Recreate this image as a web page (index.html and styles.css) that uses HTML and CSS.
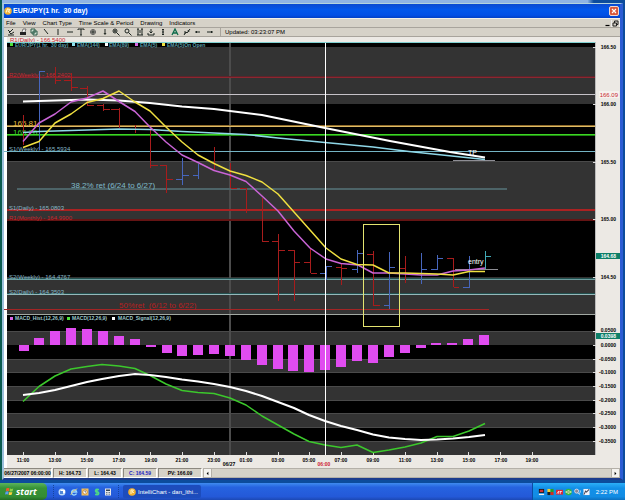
FILE: index.html
```html
<!DOCTYPE html>
<html lang="en">
<head>
<meta charset="utf-8">
<title>IntelliChart</title>
<link rel="stylesheet" href="styles.css">
</head>
<body>
<main class="desktop">
  <section class="window">
    <header class="titlebar">
      <svg class="app-icon" viewBox="0 0 8 8"><circle cx="4" cy="4" r="3.8" fill="#f3b12e"/><path d="M2 5.5 3.5 2 5.8 2.6 4.4 4.5 6 5.6" fill="none" stroke="#fff3c4" stroke-width="1.2"/></svg>
      <h1>EUR/JPY(1 hr.&nbsp; 30 day)</h1>
      <button class="close" aria-label="Close"><svg viewBox="0 0 10 10"><path d="M2.5 2.5l5 5M7.5 2.5l-5 5" stroke="#fff" stroke-width="1.4"/></svg></button>
    </header>
    <nav class="menubar">
      <button>File</button><button>View</button><button>Chart Type</button><button>Time Scale &amp; Period</button><button>Drawing</button><button>Indicators</button>
      <span class="mdi">
        <button aria-label="Minimize"><svg viewBox="0 0 7 7"><path d="M1.5 5.5h4" stroke="#000" stroke-width="1.2"/></svg></button>
        <button aria-label="Restore"><svg viewBox="0 0 7 7"><path d="M1 6V3h3.5v3zM2.5 3V1h3.5v3.5h-1.500" fill="none" stroke="#222"/></svg></button>
      </span>
    </nav>
    <div class="toolbar">
      <div class="tools">
        <button aria-label="Chart"><svg viewBox="0 0 8 8"><path d="M1 2l2 2 3-3M2 4l2 2 3-2M1 7h6" class="ic"/></svg></button>
        <button aria-label="Print"><svg viewBox="0 0 8 8"><path d="M1 4h6v3H1z" fill="#222"/><path d="M3 4l1-3h3l-1 3" fill="#eee" stroke="#333" stroke-width=".6"/></svg></button>
        <button aria-label="Copy"><svg viewBox="0 0 8 8"><path d="M1 1h4v4H1zM3 3h4v4H3z" fill="#cfe0d4" stroke="#174d38" stroke-width=".9"/></svg></button>
        <button aria-label="Trend line"><svg viewBox="0 0 8 8"><path d="M2 1l4 5" class="ic"/></svg></button>
        <button aria-label="Vertical line"><svg viewBox="0 0 8 8"><path d="M4 1v6" class="ic"/></svg></button>
        <button aria-label="Horizontal line"><svg viewBox="0 0 8 8"><path d="M1 4h6" class="ic"/></svg></button>
        <button aria-label="Text"><svg viewBox="0 0 8 8"><path d="M1 2V1h6v1M4 1v6M3 7h2" class="ic"/></svg></button>
        <button aria-label="Crosshair"><svg viewBox="0 0 8 8"><circle cx="4" cy="4" r="2.500" fill="none" stroke="#555"/><path d="M4 2v4M2 4h4" class="ic"/></svg></button>
        <button aria-label="Arrow down"><svg viewBox="0 0 8 8"><path d="M4 1v5M3 5l1 1.500 1-1.500" class="ic"/></svg></button>
        <button aria-label="Zoom in"><svg viewBox="0 0 8 8"><circle cx="3" cy="3" r="2" class="ic"/><path d="M2 3h2M3 2v2M4.500 4.500l3 3" class="ic"/></svg></button>
        <button aria-label="Zoom out"><svg viewBox="0 0 8 8"><circle cx="3" cy="3" r="2" class="ic"/><path d="M4.500 4.500l3 3" class="ic"/></svg></button>
        <button aria-label="Range"><svg viewBox="0 0 8 8"><path d="M1 1h2M2 1v6M1 7h6M5 1h2M6 1v6M4 2v3" class="ic"/></svg></button>
        <button aria-label="Import"><svg viewBox="0 0 8 8"><path d="M4 1v4M2.500 3.500 4 5l1.500-1.500M1 5v2h6V5" class="ic"/></svg></button>
        <button aria-label="Height"><svg viewBox="0 0 8 8"><path d="M3 1.500h2M4 1.500v5M3 6.500h2M3 4h2" class="ic"/></svg></button>
        <button aria-label="Font"><svg viewBox="0 0 8 8"><path d="M1 7l3-6 3 6M2.500 5h3" fill="none" stroke="#0b6b4a" stroke-width="1.300"/></svg></button>
        <button aria-label="Edit"><svg viewBox="0 0 8 8"><path d="M1 7l2-3 1 1 3-4M2 3v3M5 2l1 2" class="ic"/></svg></button>
        <button aria-label="Back"><svg viewBox="0 0 8 8"><path d="M1 4h5M2.500 3v2" class="ic"/></svg></button>
        <button aria-label="Forward"><svg viewBox="0 0 8 8"><path d="M1 4h6M5.500 3v2" class="ic"/></svg></button>
      </div>
      <span class="updated">Updated: 03:23:07 PM</span>
    </div>

    <svg class="chart" viewBox="4 37 616 431" role="img" aria-label="EUR/JPY hourly chart with MACD">
      <rect x="4" y="37" width="616" height="431" fill="#ece9e4"/>
      <rect x="4" y="37" width="3" height="431" fill="#fff"/>
      <text x="10" y="42" class="lab red">R1(Daily) - 166.5400</text>
      <g shape-rendering="crispEdges">
        <rect x="7" y="42" width="589" height="413"/>
        <rect x="7" y="42" width="589" height="1" fill="#7fd0d0"/>
        <g fill="#333">
          <rect x="7" y="47" width="588" height="57"/><rect x="7" y="162" width="588" height="58"/>
          <rect x="7" y="277" width="588" height="38"/><rect x="7" y="332" width="588" height="13"/>
          <rect x="7" y="359" width="588" height="13"/><rect x="7" y="387" width="588" height="13"/>
          <rect x="7" y="414" width="588" height="13"/><rect x="7" y="441" width="588" height="14"/>
        </g>
        <rect x="595" y="42" width="1" height="413" fill="#bbb"/>
        <g fill="#4a4a4a">
          <rect x="7" y="161" width="588" height="1"/><rect x="7" y="331" width="588" height="1"/><rect x="7" y="359" width="588" height="1"/>
          <rect x="7" y="372" width="588" height="1"/><rect x="7" y="386" width="588" height="1"/><rect x="7" y="400" width="588" height="1"/>
          <rect x="7" y="413" width="588" height="1"/><rect x="7" y="427" width="588" height="1"/><rect x="7" y="441" width="588" height="1"/>
        </g>
        <rect x="229" y="43" width="2" height="412" fill="#4c4c4c"/>
        <rect x="7" y="76" width="588" height="1" fill="#5c242a"/><rect x="7" y="77" width="588" height="1" fill="#8d2630"/>
        <rect x="7" y="94" width="588" height="1" fill="#c6c2c8"/>
        <rect x="7" y="125" width="588" height="1" fill="#8f6c2c"/><rect x="7" y="126" width="588" height="1" fill="#e0bc66"/>
        <rect x="7" y="134" width="588" height="1" fill="#3fd524"/><rect x="7" y="135" width="588" height="1" fill="#1c8a10"/>
        <rect x="4" y="151" width="591" height="1" fill="#74b4c4"/>
        <rect x="17" y="188" width="490" height="2" fill="#4d6468"/>
        <rect x="7" y="209" width="588" height="2" fill="#ab2222"/>
        <rect x="7" y="219" width="588" height="2" fill="#641414"/>
        <rect x="7" y="278" width="588" height="1" fill="#23504f"/><rect x="7" y="279" width="588" height="1" fill="#6b9c9e"/>
        <rect x="7" y="293" width="588" height="1" fill="#23504f"/><rect x="7" y="294" width="588" height="1" fill="#94b8ba"/>
        <rect x="4" y="309" width="485" height="1" fill="#a32525"/>
        <rect x="7" y="314" width="588" height="1" fill="#a2a8a2"/>
      </g>

      <!-- bottom and right axis ticks -->
      <path d="M23.500 452v3M55.500 452v3M87.500 452v3M119.500 452v3M150.500 452v3M182.500 452v3M214.500 452v3M246.500 452v3M278.500 452v3M309.500 452v3M341.500 452v3M373.500 452v3M405.500 452v3M437.500 452v3M468.500 452v3M500.500 452v3M532.500 452v3M593 47.500h3M593 104.500h3M593 162.500h3M593 219.500h3M593 277.500h3M593 331.500h3M593 345.500h3M593 359.500h3M593 372.500h3M593 386.500h3M593 400.500h3M593 413.500h3M593 427.500h3M593 441.500h3" stroke="#ddd"/>

      <g class="lab red">
        <text x="9" y="77">R2(Weekly) - 166.2402</text>
        <text x="9" y="220">R1(Monthly) - 164.9900</text>
      </g>
      <g class="lab cyan">
        <text x="9" y="151">S1(Weekly) - 165.5934</text>
        <text x="9" y="210">S1(Daily) - 165.0803</text>
        <text x="9" y="279">S2(Weekly) - 164.4767</text>
        <text x="9" y="294">S2(Daily) - 164.3503</text>
      </g>
      <g class="note">
        <text x="13" y="126" fill="#e6b93c">165.81</text>
        <text x="13" y="135" fill="#3ed52a">165.76</text>
        <text x="71" y="188" fill="#7fbccb">38.2% ret (6/24 to 6/27)</text>
        <text x="119" y="308" fill="#b62121">50%ret&#160; (6/12 to 6/22)</text>
      </g>

      <g fill="none" shape-rendering="crispEdges">
        <path stroke="#a81c1c" d="M23.500 115v30M55.500 67v17M55 80.500h6M71.500 73v18M64 80.500h7M72 87.500h6M87.500 86v20M80 88.500h7M88 105.500h6M103.500 104v7M97 105.500h6M104 109.500h6M119.500 108v20M111 109.500h8M135.500 125v8M150.500 128v40M151 165.500h7M166.500 165v28M160 165.500h6M167 179.500h6M214.500 147v23M230.500 163v25M231 188.500h6M246.500 188v25M240 188.500h6M262.500 198v44M263 241.500h6M278.500 234v67M272 241.500h6M279 250.500h6M294.500 250v51M288 250.500h6M295 262.500h5M310.500 249v24M304 262.500h6M311 273.500h6M341.500 263v22M336 267.500h5M342 268.500h5M373.500 251v55M367 254.500h6M374 305.500h6M405.500 256v27M400 268.500h5M406 273.500h5M453.500 258v29M447 258.500h6M454 287.500h5"/>
        <path stroke="#4766bd" d="M39.500 71v79M40 71.500h5M182.500 158v27M176 179.500h6M183 175.500h6M198.500 164v15M193 175.500h5M326.500 266v14M320 273.500h6M327 266.500h5M357.500 250v23M352 269.500h5M358 253.500h5M389.500 252v57M384 305.500h5M390 267.500h5M421.500 253v31M422 269.500h5M437.500 255v15M431 269.500h6M438 258.500h5M469.500 256v32M463 287.500h6M470 269.500h5"/>
        <path stroke="#3fa9b5" d="M485.500 251v18M486 256.500h5"/>
        <path stroke="#8d8d94" d="M453 160.500h42M455 269.500h43"/>
      </g>

      <g class="curve">
        <polyline stroke="#8fd8e8" points="23,132.500 39,131.500 71,130.500 119,129 150,129.500 182,131.500 214,133 246,134.500 278,138 325,142.500 373,147 409,151.500 485,159.500"/>
        <polyline class="thick" stroke="#fff" points="23,101.500 55,100.500 87,99.500 119,100.500 150,103 182,106.500 214,109 230,111 262,115 325,128 390,141 450,152 485,157.500"/>
        <polyline stroke="#c964d6" points="23,141.500 39,123 55,114 71,102 87,98 103,91 119,101.500 135,111.500 150,127 166,142 182,155 198,162.500 214,170.500 230,175 246,181.500 262,196 278,211 294,231 310,248 326,259 341,263.500 358,265 373,273 389,273 405,274 421,275 437,275 453,271 469,270 485,268"/>
        <polyline stroke="#f0e040" points="23,147.500 39,141.500 55,123 71,114 87,102.500 103,98.500 119,91 135,102 150,111 166,127 182,142 198,155 214,163.500 230,171 246,175.500 262,182 278,194 294,212 310,230 326,248 341,259 357,264.500 373,265 389,273 405,273 437,274 453,275 469,271.500 485,271.500"/>
      </g>
      <rect x="363.500" y="224.500" width="36" height="102" fill="none" stroke="#e4e470"/>
      <g class="mark"><text x="468" y="155">TP</text><text x="468" y="264">entry</text></g>

      <g fill="#e04cf0" shape-rendering="crispEdges">
        <rect x="19" y="345" width="10" height="6"/><rect x="34" y="338" width="10" height="7"/><rect x="50" y="331" width="10" height="14"/><rect x="66" y="328" width="10" height="17"/><rect x="82" y="329" width="10" height="16"/><rect x="98" y="331" width="10" height="14"/><rect x="114" y="336" width="10" height="9"/><rect x="130" y="339" width="10" height="6"/><rect x="146" y="345" width="10" height="2"/><rect x="162" y="345" width="10" height="8"/><rect x="177" y="345" width="10" height="11"/><rect x="193" y="345" width="10" height="10"/><rect x="209" y="345" width="10" height="9"/><rect x="225" y="345" width="10" height="11"/><rect x="241" y="345" width="10" height="15"/><rect x="257" y="345" width="10" height="20"/><rect x="273" y="345" width="10" height="24"/><rect x="288" y="345" width="10" height="26"/><rect x="304" y="345" width="10" height="27"/><rect x="320" y="345" width="10" height="25"/><rect x="336" y="345" width="10" height="22"/><rect x="352" y="345" width="10" height="16"/><rect x="368" y="345" width="10" height="18"/><rect x="384" y="345" width="10" height="12"/><rect x="400" y="345" width="10" height="8"/><rect x="416" y="345" width="10" height="3"/><rect x="431" y="343" width="10" height="2"/><rect x="447" y="343" width="10" height="2"/><rect x="463" y="339" width="10" height="6"/><rect x="479" y="335" width="10" height="10"/>
      </g>
      <g class="curve">
        <polyline stroke="#3cc82c" points="23,401.500 39,386.500 55,376 71,369 87,366.500 102,364.500 119,366 135,368.500 151,376 166,384 182,390.500 198,392.500 214,393.500 230,398 246,405 262,416 278,425 294,434 309,441.500 325,445 341,447.500 357,445 373,452.500 389,450 405,447 421,443 437,436.500 453,436.500 469,431 485,423.500"/>
        <polyline class="thick" stroke="#fff" points="23,395 39,393 55,390 71,386 87,382 102,379 119,376 135,374 150,375 166,377 182,379.500 198,381.500 214,384 230,387 246,391 262,396 278,402 294,408 309,415 325,421 341,426 357,430 373,434.500 389,437.500 405,439 421,440 437,439.500 453,438.500 469,437 485,435"/>
      </g>
      <rect x="325" y="43" width="1" height="412" fill="#fff"/>

      <rect x="10" y="43" width="3" height="3" fill="#4fe03a"/><rect x="72" y="43" width="3" height="3" fill="#8fe0ee"/><rect x="105" y="43" width="3" height="3" fill="#fff"/><rect x="135" y="43" width="3" height="3" fill="#d766e4"/><rect x="162" y="43" width="3" height="3" fill="#f0e040"/>
      <g class="legend" fill="#5f9da6">
        <text x="15" y="47">EUR/JPY(1 hr.&#160; 30 day)</text><text x="77" y="47">EMA(144)</text><text x="109" y="47">EMA(89)</text><text x="140" y="47">EMA(5)</text><text x="167" y="47">EMA(5)On Open</text>
      </g>
      <rect x="10" y="317" width="3" height="3" fill="#d766e4"/><rect x="67" y="317" width="3" height="3" fill="#4fe03a"/><rect x="112" y="317" width="3" height="3" fill="#fff"/>
      <g class="legend" fill="#9fc8cc">
        <text x="15" y="320">MACD_Hist.(12,26,9)</text><text x="72" y="320">MACD(12,26,9)</text><text x="118" y="320">MACD_Signal(12,26,9)</text>
      </g>

      <rect x="596" y="253" width="24" height="6" fill="#0d7f68"/>
      <rect x="596" y="333" width="24" height="6" fill="#0d7f68"/>
      <g class="axis">
        <g class="end">
          <text x="616" y="49">166.50</text><text x="616" y="106">166.00</text><text x="616" y="164">165.50</text><text x="616" y="221">165.00</text><text x="616" y="279">164.50</text>
          <text x="616" y="332">0.0500</text><text x="616" y="347">0.0000</text><text x="616" y="361">-0.0500</text><text x="616" y="374">-0.1000</text><text x="616" y="388">-0.1500</text><text x="616" y="402">-0.2000</text><text x="616" y="415">-0.2500</text><text x="616" y="429">-0.3000</text><text x="616" y="443">-0.3500</text>
          <text x="616" y="258" fill="#fff">164.68</text>
          <text x="616" y="338" fill="#fff">0.0398</text>
        </g>
        <g class="mid">
          <text x="23" y="462">11:00</text><text x="55" y="462">13:00</text><text x="87" y="462">15:00</text><text x="119" y="462">17:00</text><text x="151" y="462">19:00</text><text x="182" y="462">21:00</text><text x="214" y="462">23:00</text><text x="246" y="462">01:00</text><text x="278" y="462">03:00</text><text x="309" y="462">05:00</text><text x="341" y="462">07:00</text><text x="373" y="462">09:00</text><text x="405" y="462">11:00</text><text x="437" y="462">13:00</text><text x="469" y="462">15:00</text><text x="501" y="462">17:00</text><text x="532" y="462">19:00</text>
          <text x="229" y="466">06/27</text><text x="324" y="466" fill="#cc2030">06:00</text>
        </g>
      </g>
      <rect x="599" y="91" width="20" height="7" fill="#f6f2ee"/>
      <text x="618" y="97" class="lab red end">166.09</text>
    </svg>

    <footer class="status">
      <span class="cell date">06/27/2007 06:00:00</span>
      <span class="cell">H: 164.73</span>
      <span class="cell">L: 164.43</span>
      <span class="cell closing">C: 164.59</span>
      <span class="cell pv">PV: 166.09</span>
      <div class="scroll">
        <button aria-label="Scroll left"><svg viewBox="0 0 8 8"><path d="M5 2v4L3 4z"/></svg></button>
        <div class="track"></div>
        <button aria-label="Scroll right"><svg viewBox="0 0 8 8"><path d="M3 2v4l2-2z"/></svg></button>
      </div>
    </footer>
  </section>

  <nav class="taskbar">
    <button class="start"><svg viewBox="0 0 10 10"><path d="M1.500 1.500q2-1 3.500 0L4.300 4.600q-1.700-1-3.400 0z" fill="#f05a28"/><path d="M5.600 1.700q2 .8 3.600 0l-.8 3q-1.800.8-3.500 0z" fill="#8cd048"/><path d="M.7 5.300q1.800-.9 3.400 0L3.400 8.400q-1.700-.9-3.400 0z" fill="#5a9cf0"/><path d="M4.700 5.500q1.800.8 3.500 0l-.8 3q-1.800.9-3.400 0z" fill="#fad23c"/></svg>start</button>
    <div class="quick">
      <button aria-label="Messenger"><svg viewBox="0 0 8 8"><circle cx="4" cy="4" r="3.500" fill="#bcd8f6"/><path d="M3 2h4v3H3z" fill="#fff"/><path d="M2 3h3v3H2z" fill="#4f86d8"/></svg></button>
      <button aria-label="Internet Explorer"><svg viewBox="0 0 8 8"><path d="M6.500 5.500A2.600 2.600 0 1 1 6.700 4H2" fill="none" stroke="#9ad8ff" stroke-width="1.300"/><path d="M.7 7Q1 3 7.300.8" fill="none" stroke="#e8d070" stroke-width=".8"/></svg></button>
      <button aria-label="Outlook"><svg viewBox="0 0 8 8"><path d="M.5.5h7v7h-7z" fill="#f0c060"/><circle cx="4" cy="4" r="2.200" fill="#fff" stroke="#c07a20" stroke-width=".8"/><path d="M4 2.500V4h1" stroke="#444" fill="none" stroke-width=".7"/></svg></button>
      <button aria-label="Finance"><svg viewBox="0 0 8 8"><path d="M6 1.500H3Q1.800 3 3 4h2q1.500 1 .2 2.500H2M4 .5v7" fill="none" stroke="#4fd884" stroke-width="1.400"/></svg></button>
      <button aria-label="Calculator"><svg viewBox="0 0 8 8"><path d="M1 .5h6v7H1z" fill="#e6e6ea"/><path d="M2 1.500h4v1.500H2z" fill="#345"/><path d="M2 4.500h4M2 6.200h4" stroke="#678" stroke-dasharray="1 .5"/></svg></button>
    </div>
    <button class="task"><svg viewBox="0 0 8 8"><circle cx="4" cy="4" r="3.800" fill="#f3b12e"/><path d="M3 6V2h2.500L4 4l2 .5" fill="none" stroke="#fff3c4"/></svg>IntelliChart - dan_lthi...</button>
    <div class="tray">
      <svg viewBox="0 0 8 8"><path d="M1 .5h6v4.500H1z" fill="#181820"/><path d="M2 1.500h4v2.500H2z" fill="#d03030"/><path d="M1 6h6v1.500H1z" fill="#eee"/></svg>
      <svg viewBox="0 0 8 8"><path d="M.5.5H4V4H.5z" fill="#f0d030"/><path d="M4 .5h3.500V4H4z" fill="#28a028"/><path d="M.5 4H4v3.500H.5z" fill="#202020"/><path d="M4 4h3.500v3.500H4z" fill="#d03020"/></svg>
      <svg viewBox="0 0 8 8"><path d="M0 1.500h8v5.500H0z" fill="#d82838"/><path d="M1 6l2-3v3M5 3v3M4 3.500h3" stroke="#fff" stroke-width=".8" fill="none"/></svg>
      <svg viewBox="0 0 8 8"><circle cx="4" cy="4" r="3.700" fill="#30b840"/><path d="M0 4l4-2 4 2-4 2z" fill="#f8f8d0"/><path d="M2 4h4" stroke="#207820"/></svg>
      <svg viewBox="0 0 8 8"><circle cx="3" cy="3" r="2.300" fill="#889" stroke="#dde"/><path d="M4 5l3 2M7 2Q8 4 6 6" stroke="#cde" fill="none"/></svg>
      <svg viewBox="0 0 8 8"><path d="M.5.500h7v7h-7z" fill="#f2f2fa"/><path d="M1 7l2-4 1 1 3-3" stroke="#445" stroke-width="1.200" fill="none"/></svg>
      <time>2:22 PM</time>
    </div>
  </nav>
</main>
</body>
</html>
```
FILE: styles.css
```css
* { box-sizing: border-box; }

body {
  margin: 0;
  font: 6px/8px "Liberation Sans", Arial, sans-serif;
  color: #000;
}

button {
  margin: 0;
  padding: 0;
  border: 0;
  background: none;
  font: inherit;
  color: inherit;
}

button svg { display: block; }

.desktop {
  display: flex;
  flex-direction: column;
  min-height: 100vh;
  padding-top: 3px;
  background: linear-gradient(90deg, #0b5c50 0 2px, #8fb4e4 2px 94%, #0c4c9c 95%);
}

.window {
  margin: 0 2px;
  border: solid;
  border-width: 1px 3px 2px 2px;
  border-color: #b4d4dc #2c5cd4 #1c3c8c #9cc0dc;
  background: #ece9e4;
}

.titlebar {
  display: flex;
  align-items: center;
  gap: 1px;
  height: 14px;
  background: linear-gradient(#0a4ad0, #0257ea 40%, #0250e6 80%, #0340c4);
}

.app-icon { width: 8px; height: 8px; }

.titlebar h1 {
  flex: 1;
  margin: 0;
  font-size: 7px;
  line-height: 10px;
  color: #fff;
}

.close {
  width: 10px;
  height: 10px;
  margin-right: 1px;
  border: 1px solid #f0d8d0;
  border-radius: 2px;
  background: #d8583c;
}

.menubar {
  display: flex;
  align-items: center;
  gap: 7px;
  height: 10px;
  padding-left: 2px;
  border-top: 1px solid #f4f0e8;
  border-bottom: 1px solid #a8a49c;
  background: #d6d2c8;
}

.mdi {
  display: flex;
  margin-left: auto;
}

.mdi svg { width: 7px; height: 7px; }

.mdi button { border: 1px solid #eee; border-width: 0 1px 0 0; }

.toolbar {
  display: flex;
  align-items: center;
  height: 9px;
  border-bottom: 1px solid #a8a49c;
  background: #d6d2c8;
}

.tools {
  display: flex;
  justify-content: space-between;
  width: 212px;
  padding: 0 2px 0 3px;
}

.tools svg { width: 8px; height: 8px; }

.ic {
  fill: none;
  stroke: #1c2420;
  stroke-width: 1;
}

.updated {
  margin-left: 4px;
  padding-left: 4px;
  border-left: 1px solid #a8a49c;
}

.chart {
  display: block;
  width: 100%;
  height: auto;
}

.lab { font-size: 6px; }
.red { fill: #c82830; }
.cyan { fill: #86b8c6; }
.note { font-size: 8px; }
.mark { font-size: 7px; fill: #fff; }
.legend { font-size: 5px; font-weight: bold; }
.axis { font-size: 5px; font-weight: bold; }
.end { text-anchor: end; }
.mid { text-anchor: middle; }

.curve polyline {
  fill: none;
  stroke-width: 1.5;
  stroke-linejoin: round;
}

.curve .thick { stroke-width: 2; }

.status {
  display: flex;
  gap: 1px;
  height: 10px;
  font-size: 5px;
  font-weight: bold;
  background: #ece9e4;
}

.cell {
  width: 34px;
  border: 1px solid #8c8880;
  border-right-color: #fff;
  border-bottom-color: #fff;
  background: #d6d2c8;
  text-align: center;
  white-space: nowrap;
}

.date {
  width: 48px;
  border-left: 0;
}

.pv { width: 44px; }
.closing { color: #1c1cc0; }

.scroll {
  display: flex;
  flex: 1;
}

.scroll button {
  width: 9px;
  border: 1px solid #b4b0a8;
  background: #f4f2ee;
}

.scroll svg { width: 7px; height: 7px; }

.track {
  flex: 1;
  border: 1px solid #b4b0a8;
  border-width: 1px 0;
  background: #d6d2c8;
}

.taskbar {
  display: flex;
  align-items: stretch;
  height: 20px;
  margin-top: auto;
  border-top: 3px solid #0c4c9c;
  background: linear-gradient(#3f8cf0, #2663e0 25%, #2459d8 80%, #1c48b4);
  color: #fff;
}

.start {
  display: flex;
  align-items: center;
  gap: 2px;
  width: 47px;
  padding-left: 5px;
  border-radius: 0 5px 5px 0;
  background: linear-gradient(#5cb45c, #379337 30%, #348c34 80%, #246c24);
  font: italic bold 9px/12px "Open Sans", "Liberation Sans", sans-serif;
}

.start svg { width: 9px; height: 9px; }

.quick {
  display: flex;
  align-items: center;
  justify-content: space-between;
  width: 66px;
  margin: 2px 4px 2px 6px;
  padding: 0 6px 0 4px;
  border: dotted #16439c;
  border-width: 0 1px;
}

.quick svg { width: 8px; height: 8px; }

.task {
  display: flex;
  align-items: center;
  gap: 2px;
  width: 78px;
  margin: 2px 0;
  padding-left: 5px;
  border-radius: 2px;
  background: #1d4cbc;
}

.task svg { width: 8px; height: 8px; }

.tray {
  display: flex;
  align-items: center;
  gap: 2px;
  margin-left: auto;
  padding: 0 7px 0 5px;
  border-left: 1px solid #0c4ca4;
  background: linear-gradient(#2cb0f8, #1290e8 30%, #128ce4 80%, #0c70c0);
}

.tray svg { width: 7px; height: 8px; }

.tray time { margin-left: 4px; }
```
